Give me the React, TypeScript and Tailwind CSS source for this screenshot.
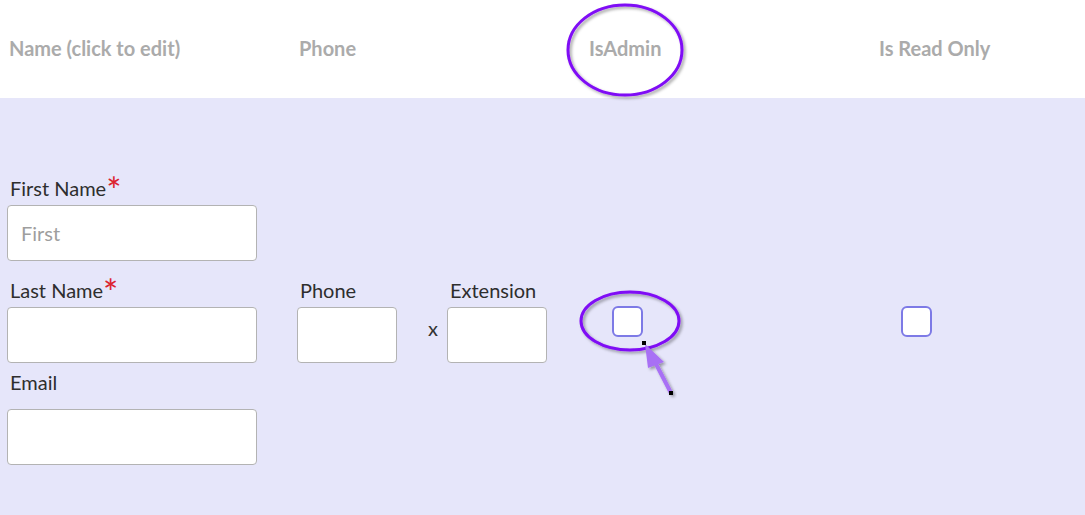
import React from "react";

const labelCls = "block pl-[3px] h-[22px] text-[20px] leading-[21px] text-[#2e2e2e] whitespace-nowrap";
const inputCls =
  "block h-[56px] rounded-[4px] border border-[#b3b3b3] bg-white px-[13px] text-[20px] text-[#333] placeholder:text-[#9e9e9e] outline-none";

const Required = () => (
  <span className="relative top-[2px] inline-block h-[21px] align-top text-[36px] leading-[21px] text-[#dc2330]">*</span>
);

const Checkbox = ({ className = "" }: { className?: string }) => (
  <div className={`h-[31px] w-[31px] shrink-0 rounded-[6px] border-2 border-[#7d7ae6] bg-white ${className}`} />
);

export default function App() {
  const headers = ["Name (click to edit)", "Phone", "IsAdmin", "Is Read Only"];

  return (
    <div className="relative h-[515px] w-[1085px] overflow-hidden bg-white" style={{ fontFamily: "Lato, 'Open Sans', sans-serif" }}>
      {/* table header */}
      <div className="flex h-[98px] items-center pb-[3px] pl-[9px]">
        {headers.map((h) => (
          <div key={h} className="w-[290px] shrink-0 whitespace-nowrap text-[20px] font-bold text-[#ababab]">
            {h}
          </div>
        ))}
      </div>

      {/* edit row */}
      <div className="h-[417px] bg-[#e6e6fa] pl-[7px] pt-[80px]">
        <label className={labelCls}>
          First Name
          <Required />
        </label>
        <input className={`${inputCls} mt-[5px] w-[250px]`} placeholder="First" />

        <div className="mt-[19px] flex items-start">
          <div className="w-[290px] shrink-0">
            <label className={labelCls}>
              Last Name
              <Required />
            </label>
            <input className={`${inputCls} mt-[5px] w-[250px]`} />
          </div>
          <div className="w-[100px] shrink-0">
            <label className={labelCls}>Phone</label>
            <input className={`${inputCls} mt-[5px] w-[100px]`} />
          </div>
          <div className="ml-[31px] mr-[9px] mt-[37px] text-[20px] leading-[22px] text-[#333]">x</div>
          <div className="w-[100px] shrink-0">
            <label className={labelCls}>Extension</label>
            <input className={`${inputCls} mt-[5px] w-[100px]`} />
          </div>
          <Checkbox className="ml-[65px] mt-[26px]" />
          <Checkbox className="ml-[258px] mt-[26px]" />
        </div>

        <label className={`${labelCls} mt-[9px]`}>Email</label>
        <input className={`${inputCls} mt-[15px] w-[250px]`} />
      </div>

      {/* annotations drawn over the screenshot */}
      <svg className="pointer-events-none absolute left-0 top-0" width="1085" height="515">
        <defs>
          <filter id="shadow" x="-20%" y="-20%" width="140%" height="140%">
            <feDropShadow dx="2" dy="2" stdDeviation="1.5" floodColor="#000" floodOpacity="0.35" />
          </filter>
        </defs>
        <ellipse cx="625" cy="50" rx="57" ry="45" fill="none" stroke="#7f0af5" strokeWidth="3" filter="url(#shadow)" />
        <ellipse cx="630" cy="321" rx="49" ry="29" fill="none" stroke="#7f0af5" strokeWidth="3" filter="url(#shadow)" />
        <g filter="url(#shadow)">
          <line x1="671" y1="393" x2="654" y2="360" stroke="#a86ff5" strokeWidth="4" strokeLinecap="round" />
          <polygon points="645,344 664,362 648,368" fill="#a86ff5" />
        </g>
        <rect x="642" y="341" width="4" height="4" fill="#000" />
        <rect x="669" y="391" width="4" height="4" fill="#000" />
      </svg>
    </div>
  );
}
